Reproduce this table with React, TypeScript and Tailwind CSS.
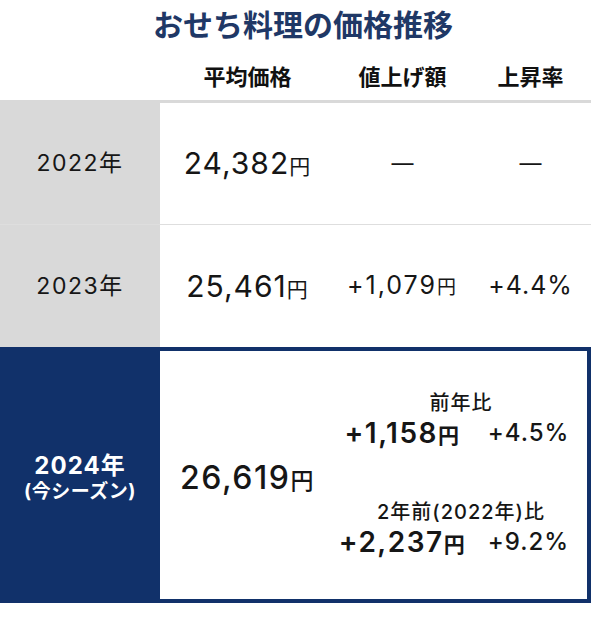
const font = { fontFamily: 'Inter, "Noto Sans CJK JP", "Noto Sans", sans-serif' }

type YenProps = { value: string; size: string; yen: string }

const Yen = ({ value, size, yen }: YenProps) => (
  <span className="whitespace-nowrap">
    <span className={size}>{value}</span>
    <span className={yen}>円</span>
  </span>
)

const cols = "grid grid-cols-[160px_175px_135px_121px]"

const App = () => {
  return (
    <div className="w-[594px] h-[627px] bg-white text-[#161616]" style={font}>
      <h1 className="h-[56px] pt-[5px] pl-[12px] text-center text-[30px] leading-[40px] font-bold text-[#1f3866]">
        おせち料理の価格推移
      </h1>

      <div className={`${cols} h-[44px] pt-[6px] text-[22px] leading-[30px] font-bold text-[#111]`}>
        <div />
        <p className="text-center">平均価格</p>
        <p className="text-center">値上げ額</p>
        <p className="text-center">上昇率</p>
      </div>

      <div className="w-[591px] border-t-[3px] border-[#d9d9d9]">
        <div className={`${cols} h-[122px] items-center border-b border-[#dedede]`}>
          <div className="h-full bg-[#d9d9d9] flex items-center justify-center text-[23px] tracking-[1.5px]">2022年</div>
          <div className="text-center tracking-[1px]">
            <Yen value="24,382" size="text-[30px]" yen="text-[21px]" />
          </div>
          <div className="text-center text-[22px]">—</div>
          <div className="text-center text-[22px]">—</div>
        </div>

        <div className={`${cols} h-[122px] items-center`}>
          <div className="h-full bg-[#d9d9d9] flex items-center justify-center text-[23px] tracking-[1.5px]">2023年</div>
          <div className="text-center tracking-[1px]">
            <Yen value="25,461" size="text-[30px]" yen="text-[21px]" />
          </div>
          <div className="text-center tracking-[2px]">
            <Yen value="+1,079" size="text-[25px]" yen="text-[19px]" />
          </div>
          <div className="text-center text-[25px] tracking-[1px]">+4.4%</div>
        </div>

        <div className="flex h-[256px] bg-[#11316a]">
          <div className="w-[160px] pt-[6px] flex flex-col items-center justify-center text-white font-bold">
            <p className="text-[24px] leading-[28px] tracking-[1px]">2024年</p>
            <p className="text-[19px] leading-[24px] tracking-[0.5px]">(今シーズン)</p>
          </div>

          <div className="flex-1 my-[4px] mr-[4px] bg-white grid grid-cols-[175px_1fr]">
            <div className="flex items-center justify-center pt-[6px] font-medium tracking-[1.5px]">
              <Yen value="26,619" size="text-[32px]" yen="text-[23px]" />
            </div>

            <div className="pt-[39px] flex flex-col gap-[45px] font-medium">
              <div>
                <p className="text-center text-[20px] leading-[26px] tracking-[1px]">前年比</p>
                <div className="grid grid-cols-[135px_1fr] leading-[34px]">
                  <div className="text-center font-semibold tracking-[1.5px]">
                    <Yen value="+1,158" size="text-[28px]" yen="text-[21px]" />
                  </div>
                  <div className="text-center text-[24px] tracking-[1px]">+4.5%</div>
                </div>
              </div>
              <div>
                <p className="text-center text-[20px] leading-[26px] tracking-[1px]">2年前(2022年)比</p>
                <div className="grid grid-cols-[135px_1fr] leading-[34px]">
                  <div className="text-center font-semibold tracking-[1.5px]">
                    <Yen value="+2,237" size="text-[28px]" yen="text-[21px]" />
                  </div>
                  <div className="text-center text-[24px] tracking-[1px]">+9.2%</div>
                </div>
              </div>
            </div>
          </div>
        </div>
      </div>
    </div>
  )
}

export default App
